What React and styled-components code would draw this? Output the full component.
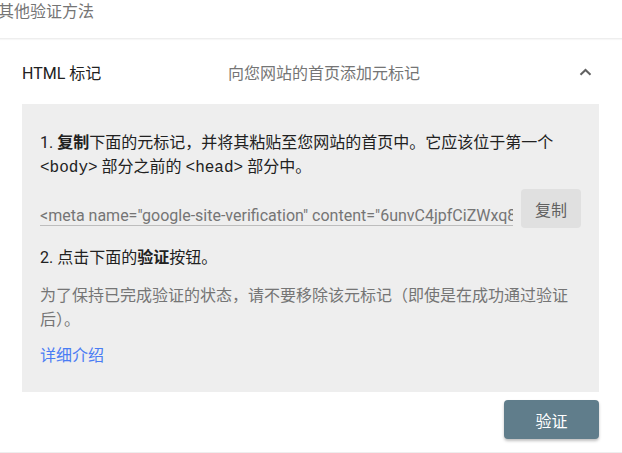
import React from 'react';
import styled, {createGlobalStyle} from 'styled-components';

const GlobalStyle = createGlobalStyle`
  body {
    margin: 0;
    background: #fff;
    font-family: Roboto, "Noto Sans CJK SC", sans-serif;
    color: #212121;
  }
`;

const Page = styled.div`
  width: 622px;
  height: 453px;
  overflow: hidden;
  border-bottom: 1px solid #eeeeee;
  box-sizing: border-box;
`;

const SectionTitle = styled.div`
  height: 38px;
  margin-left: -2px;
  font-size: 16px;
  line-height: 24px;
  color: #757575;
  border-bottom: 1px solid #eeeeee;
  box-shadow: 0 1px 1px rgba(0, 0, 0, 0.03);
`;

const Card = styled.div`
  padding: 0 23px 0 22px;
`;

const Header = styled.div`
  display: flex;
  align-items: center;
  height: 65px;
  font-size: 16px;
`;

const Label = styled.div`
  width: 206px;
  color: #212121;
`;

const Desc = styled.div`
  flex: 1;
  color: #757575;
`;

const Chevron = styled.svg`
  width: 13px;
  height: 8px;
  margin-right: 7px;
`;

const Panel = styled.div`
  background: #eeeeee;
  padding: 27px 18px 24px 18px;
  font-size: 16px;
`;

const Para = styled.p`
  margin: ${p => p.$top || 0}px 0 0 0;
  line-height: ${p => p.$lh || 24}px;
  color: ${p => (p.$muted ? '#757575' : '#212121')};
  b {
    font-weight: 700;
  }
`;

const Code = styled.code`
  font-family: "Liberation Mono", "Courier New", monospace;
  font-size: 16px;
`;

const CopyRow = styled.div`
  display: flex;
  align-items: flex-end;
  gap: 8px;
  margin-top: 9px;
`;

const MetaInput = styled.input`
  flex: 1;
  min-width: 0;
  height: 20px;
  padding: 0;
  margin-bottom: 2px;
  border: none;
  border-bottom: 1px solid #bdbdbd;
  background: transparent;
  font-family: Roboto, sans-serif;
  font-size: 16px;
  color: #757575;
  outline: none;
`;

const GrayButton = styled.button`
  width: 60px;
  height: 39px;
  border: none;
  border-radius: 4px;
  background: #e0e0e0;
  color: #616161;
  font-family: Roboto, "Noto Sans CJK SC", sans-serif;
  font-size: 16px;
  cursor: pointer;
`;

const Link = styled.a`
  display: block;
  margin-top: 12px;
  line-height: 24px;
  color: #4a7cf4;
  text-decoration: none;
`;

const Footer = styled.div`
  display: flex;
  justify-content: flex-end;
  padding-top: 8px;
`;

const PrimaryButton = styled.button`
  width: 95px;
  height: 39px;
  border: none;
  border-radius: 4px;
  background: #607d8b;
  color: #fff;
  font-family: Roboto, "Noto Sans CJK SC", sans-serif;
  font-size: 16px;
  box-shadow: 0 2px 3px rgba(0, 0, 0, 0.25);
  cursor: pointer;
`;

const META = '<meta name="google-site-verification" content="6unvC4jpfCiZWxq8sT2vLkQ0aRbY3" />';

const App = () => {
    return (
        <Page>
            <GlobalStyle />
            <SectionTitle>其他验证方法</SectionTitle>
            <Card>
                <Header>
                    <Label>HTML 标记</Label>
                    <Desc>向您网站的首页添加元标记</Desc>
                    <Chevron viewBox="0 0 13 8">
                        <path d="M1.5 6.8 L6.5 2 L11.5 6.8" fill="none" stroke="#616161" strokeWidth="2" />
                    </Chevron>
                </Header>
                <Panel>
                    <Para>
                        1. <b>复制</b>下面的元标记，并将其粘贴至您网站的首页中。它应该位于第一个 <Code>&lt;body&gt;</Code> 部分之前的 <Code>&lt;head&gt;</Code> 部分中。
                    </Para>
                    <CopyRow>
                        <MetaInput readOnly value={META} />
                        <GrayButton>复制</GrayButton>
                    </CopyRow>
                    <Para $top={18}>
                        2. 点击下面的<b>验证</b>按钮。
                    </Para>
                    <Para $top={14} $muted>
                        为了保持已完成验证的状态，请不要移除该元标记（即使是在成功通过验证后）。
                    </Para>
                    <Link href="#">详细介绍</Link>
                </Panel>
                <Footer>
                    <PrimaryButton>验证</PrimaryButton>
                </Footer>
            </Card>
        </Page>
    );
};

export default App;
